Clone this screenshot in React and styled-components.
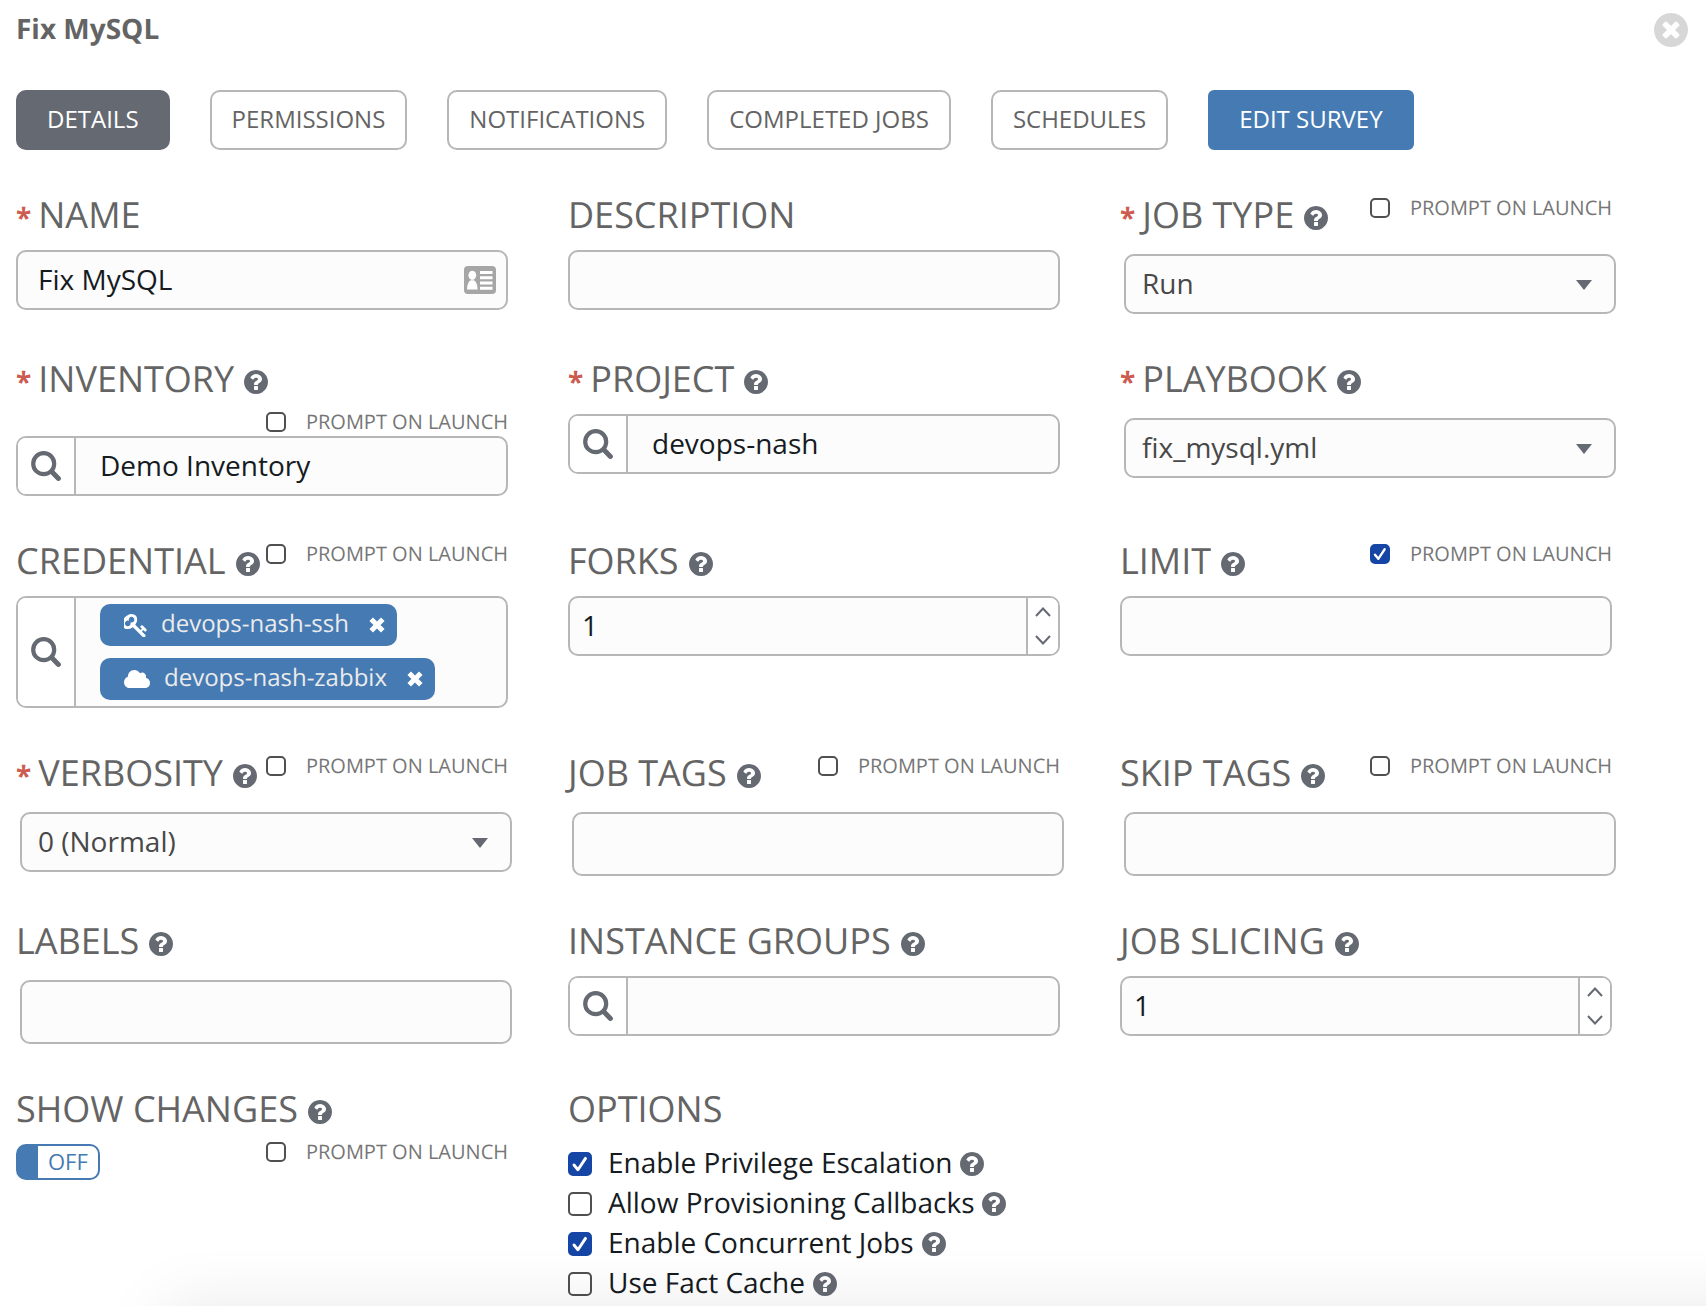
import React, { useId } from 'react';
import styled, { createGlobalStyle, css } from 'styled-components';
import { FaCloud } from 'react-icons/fa';

const color = {
  text: '#161b1f',
  label: '#646464',
  prompt: '#767676',
  icon: '#656972',
  border: '#b7b7b7',
  field: '#fcfcfc',
  blue: '#467ab3',
  check: '#1646a5',
  error: '#cc5b50',
};

const GlobalStyle = createGlobalStyle`
  *, *::before, *::after { box-sizing: border-box; }
  body {
    margin: 0;
    background: #fff;
    color: ${color.text};
    font-family: "Open Sans", "Noto Sans", sans-serif;
    text-rendering: geometricPrecision;
  }
  button, input, select { font: inherit; color: inherit; margin: 0; }
  button { cursor: pointer; }
`;

const Panel = styled.main`
  padding: 10px 18px 0 16px;
`;

const Header = styled.header`
  display: flex;
  align-items: center;
  justify-content: space-between;
  height: 40px;
  margin-bottom: 40px;
`;

const Title = styled.h1`
  margin: 0;
  padding-bottom: 2px;
  font-size: 28px;
  line-height: 38px;
  font-weight: 700;
  color: ${color.label};
`;

const CloseButton = styled.button`
  display: flex;
  padding: 0;
  border: 0;
  background: none;
  color: #d7d7d7;
`;

const Tabs = styled.nav`
  display: flex;
  flex-wrap: wrap;
  gap: 20px 40px;
  margin-bottom: 44px;
`;

const Tab = styled.button`
  height: 60px;
  padding: 0 20px 2px;
  border: 2px solid ${color.border};
  border-radius: 10px;
  background: #fff;
  color: ${color.label};
  font-size: 24px;
  line-height: 32px;
  ${({ $tone }) => $tone && css`
    padding: 0 29px 2px;
    color: #fff;
  `}
  ${({ $tone }) => $tone === 'active' && css`
    background: ${color.icon};
    border-color: ${color.icon};
  `}
  ${({ $tone }) => $tone === 'primary' && css`
    background: ${color.blue};
    border-color: ${color.blue};
    border-radius: 6px;
  `}
`;

const Form = styled.form`
  display: grid;
  grid-template-columns: repeat(3, minmax(0, 1fr));
  gap: 44px 60px;
  align-items: start;
  padding-right: 76px;
`;

const FieldBox = styled.div`
  min-width: 0;
`;

const FieldHead = styled.div`
  display: flex;
  justify-content: space-between;
  margin-bottom: ${({ $inset }) => ($inset ? '20px' : '16px')};
  ${({ $stacked }) => $stacked && css`
    flex-direction: column;
    gap: 10px;
    margin-bottom: 0;
  `}
`;

const LabelLine = styled.div`
  height: 40px;
  font-size: 36px;
  line-height: 42px;
  color: ${color.label};
  white-space: nowrap;
`;

const Required = styled.span`
  margin-right: 7px;
  color: ${color.error};
  font-size: 28px;
  font-weight: 700;
  line-height: 1;
`;

const HelpButton = styled.button`
  display: inline-flex;
  margin-left: ${({ $tight }) => ($tight ? '8px' : '10px')};
  padding: 0;
  border: 0;
  background: none;
  color: ${color.icon};
  line-height: 1;
  vertical-align: -2px;
`;

const PromptLabel = styled.label`
  display: flex;
  align-items: center;
  align-self: ${({ $end }) => ($end ? 'flex-end' : 'flex-start')};
  gap: 20px;
  height: 28px;
  font-size: 20px;
  line-height: 28px;
  color: ${color.prompt};
  white-space: nowrap;
`;

const CheckFrame = styled.span`
  display: inline-grid;
  flex: none;
  width: ${({ $size }) => $size}px;
  height: ${({ $size }) => $size}px;
  & > * { grid-area: 1 / 1; width: 100%; height: 100%; }
  svg { pointer-events: none; visibility: hidden; }
  input:checked + svg { visibility: visible; }
`;

const CheckInput = styled.input`
  appearance: none;
  border: 2px solid #505050;
  border-radius: 5px;
  background: #fff;
  &:checked {
    border-color: ${color.check};
    background: ${color.check};
  }
`;

const frame = css`
  border: 2px solid ${color.border};
  border-radius: 10px;
  background: ${color.field};
`;

const Control = styled.div`
  ${frame}
  display: flex;
  align-items: stretch;
  min-height: 60px;
  overflow: hidden;
`;

const BareInput = styled.input`
  flex: 1;
  min-width: 0;
  padding: 0 ${({ $inset }) => $inset || 20}px 2px;
  border: 0;
  outline: 0;
  background: transparent;
  appearance: textfield;
  font-size: 28px;
  line-height: 40px;
  &::-webkit-inner-spin-button { appearance: none; }
`;

const Adornment = styled.span`
  display: flex;
  align-items: center;
  padding-right: 10px;
`;

const SearchButton = styled.button`
  display: flex;
  align-items: center;
  justify-content: center;
  flex: none;
  width: 58px;
  padding: 0;
  border: 0;
  border-right: 2px solid ${color.border};
  background: #fff;
  color: ${color.icon};
`;

const Chips = styled.ul`
  display: flex;
  flex-direction: column;
  align-items: flex-start;
  gap: 12px;
  margin: 0;
  padding: 6px 24px;
  list-style: none;
`;

const Chip = styled.li`
  display: flex;
  align-items: center;
  height: 42px;
  padding: 0 12px 0 24px;
  border-radius: 10px;
  background: ${color.blue};
  color: #ebebeb;
  font-size: 24px;
  line-height: 40px;
`;

const ChipText = styled.span`
  margin: 0 20px 0 14px;
  padding-bottom: 2px;
`;

const ChipRemove = styled.button`
  display: flex;
  padding: 0;
  border: 0;
  background: none;
  color: #fff;
`;

const Stepper = styled.div`
  display: flex;
  flex-direction: column;
  flex: none;
  width: 32px;
  border-left: 2px solid ${color.border};
  background: #fff;
`;

const StepButton = styled.button`
  display: flex;
  flex: 1;
  align-items: ${({ $down }) => ($down ? 'flex-start' : 'flex-end')};
  justify-content: center;
  padding: 9px 0;
  border: 0;
  background: none;
  color: ${color.icon};
`;

const Inset = styled.div`
  position: relative;
  width: 100%;
  margin-left: 4px;
`;

const SelectInput = styled.select`
  ${frame}
  display: block;
  appearance: none;
  width: 100%;
  height: 60px;
  padding: 0 48px 2px 16px;
  color: #484848;
  font-size: 28px;
  line-height: 40px;
`;

const Caret = styled.svg`
  position: absolute;
  top: 26px;
  right: 24px;
  pointer-events: none;
  fill: ${color.icon};
`;

const TagInput = styled.input`
  ${frame}
  display: block;
  width: 100%;
  height: 64px;
  padding: 0 16px;
  font-size: 28px;
`;

const SwitchRow = styled.div`
  display: flex;
  align-items: flex-start;
  justify-content: space-between;
  padding-top: 10px;
`;

const Switch = styled.button`
  width: 84px;
  height: 36px;
  margin-top: 6px;
  padding: 0 0 2px 10px;
  border: 2px solid ${color.blue};
  border-left-width: 22px;
  border-radius: 10px;
  background: #fff;
  color: ${color.blue};
  font-size: 22px;
  line-height: 30px;
  text-align: left;
`;

const OptionGroup = styled.fieldset`
  min-width: 0;
  margin: 0;
  padding: 0;
  border: 0;
`;

const Legend = styled.legend`
  height: 40px;
  margin-bottom: 16px;
  padding: 0;
  font-size: 36px;
  line-height: 42px;
  color: ${color.label};
`;

const OptionRow = styled.div`
  display: flex;
  align-items: center;
  height: 40px;
  font-size: 28px;
  line-height: 38px;
  white-space: nowrap;
`;

const OptionLabel = styled.label`
  display: flex;
  align-items: center;
  gap: 16px;
`;

const OptionText = styled.span`
  padding-bottom: 2px;
`;

const EdgeShadow = styled.div`
  position: fixed;
  left: 165px;
  right: -100px;
  bottom: -200px;
  height: 200px;
  box-shadow: 0 0 64px rgba(0, 0, 0, 0.09);
  pointer-events: none;
`;

const QuestionIcon = () => (
  <svg width="24" height="24" viewBox="128 128 1536 1536" fill="currentColor" aria-hidden="true">
    <path d="M1024 1376v-192q0-14-9-23t-23-9h-192q-14 0-23 9t-9 23v192q0 14 9 23t23 9h192q14 0 23-9t9-23zm256-672q0-88-55.500-163t-138.500-116-170-41q-243 0-371 213-15 24 8 42l132 100q7 6 19 6 16 0 25-12 53-68 86-92 34-24 86-24 48 0 85.500 26t37.500 59q0 38-20 61t-68 45q-63 28-115.500 86.500t-52.500 125.500v36q0 14 9 23t23 9h192q14 0 23-9t9-23q0-19 21.500-49.500t54.500-49.500q32-18 49-28.500t46-35 44.500-48 28-60.500 12.500-81zm384 192q0 209-103 385.500t-279.500 279.500-385.500 103-385.500-103-279.500-279.500-103-385.500 103-385.500 279.500-279.500 385.500-103 385.500 103 279.500 279.500 103 385.500z" />
  </svg>
);

const CloseIcon = () => (
  <svg width="34" height="34" viewBox="128 128 1536 1536" fill="currentColor" aria-hidden="true">
    <path d="M1277 1122q0-26-19-45l-181-181 181-181q19-19 19-45 0-27-19-46l-90-90q-19-19-46-19-26 0-45 19l-181 181-181-181q-19-19-45-19-27 0-46 19l-90 90q-19 19-19 46 0 26 19 45l181 181-181 181q-19 19-19 45 0 27 19 46l90 90q19 19 46 19 26 0 45-19l181-181 181 181q19 19 45 19 27 0 46-19l90-90q19-19 19-46zm387-226q0 209-103 385.500t-279.500 279.500-385.500 103-385.500-103-279.500-279.500-103-385.500 103-385.500 279.500-279.500 385.500-103 385.500 103 279.500 279.500 103 385.500z" />
  </svg>
);

const SearchIcon = () => (
  <svg width="30" height="30" viewBox="0 0 30 30" fill="none" stroke="currentColor" aria-hidden="true">
    <circle cx="12.7" cy="12.7" r="10.5" strokeWidth="4.2" />
    <path d="M20.6 20.6 27.4 27.4" strokeWidth="5" strokeLinecap="round" />
  </svg>
);

const KeyIcon = () => (
  <svg width="23" height="23" viewBox="128 128 1560 1560" fill="#fff" aria-hidden="true">
    <path d="M832 512q0-80-56-136t-136-56-136 56-56 136q0 42 19 83-41-19-83-19-80 0-136 56t-56 136 56 136 136 56 136-56 56-136q0-42-19-83 41 19 83 19 80 0 136-56t56-136zm851 704q0 17-49 66t-66 49q-9 0-28.500-16t-36.500-33-38.500-40-24.500-26l-96 96 220 220q28 28 28 68 0 42-39 81t-81 39q-40 0-68-28l-671-671q-176 131-365 131-163 0-265.500-102.500t-102.500-265.500q0-160 95-313t248-248 313-95q163 0 265.500 102.500t102.500 265.500q0 189-131 365l355 355 96-96q-3-3-26-24.500t-40-38.500-33-36.500-16-28.500q0-17 49-66t66-49q13 0 23 10 6 6 46 44.500t82 79.500 86.500 86 73 78 28.500 41z" />
  </svg>
);

const CrossIcon = () => (
  <svg width="16" height="16" viewBox="0 0 16 16" stroke="currentColor" strokeWidth="5" aria-hidden="true">
    <path d="M2.2 2.2 13.8 13.8M13.8 2.2 2.2 13.8" />
  </svg>
);

const CardIcon = () => (
  <svg width="32" height="28" viewBox="0 0 32 28" aria-hidden="true">
    <rect width="32" height="28" rx="4" fill="#a6a6a6" />
    <g fill="#fff">
      <ellipse cx="8.3" cy="9.3" rx="3.9" ry="4.6" />
      <path d="M3 23.5c0-5 1.6-8 3.600-9.300h3.400c2 1.300 3.600 4.300 3.600 9.300z" />
      <path d="M16 5h12.500v3H16zM16 10.300h12.500v3H16zM16 15.600h12.500v3H16zM16 20.800h12.500v3H16z" />
    </g>
  </svg>
);

const Chevron = ({ down }) => (
  <svg width="16" height="10" viewBox="0 0 16 10" fill="none" stroke="currentColor" strokeWidth="2" aria-hidden="true">
    <path d={down ? 'M1 1 8 8.5 15 1' : 'M1 9 8 1.5 15 9'} />
  </svg>
);

const Help = ({ about, tight }) => (
  <HelpButton type="button" $tight={tight} aria-label={`Help: ${about}`}>
    <QuestionIcon />
  </HelpButton>
);

const Check = ({ size, ...rest }) => (
  <CheckFrame $size={size}>
    <CheckInput type="checkbox" {...rest} />
    <svg viewBox="0 0 20 20" fill="none" stroke="#fff" strokeWidth="2.4" strokeLinecap="round" strokeLinejoin="round" aria-hidden="true">
      <path d="M5 10.8 8.3 14.8 14.6 5.3" />
    </svg>
  </CheckFrame>
);

const Prompt = ({ checked, end }) => (
  <PromptLabel $end={end}>
    <Check size={20} defaultChecked={checked} />
    PROMPT ON LAUNCH
  </PromptLabel>
);

const Head = ({ id, label, required, help, prompt, promptChecked, stacked, inset }) => (
  <FieldHead $stacked={stacked} $inset={inset}>
    <LabelLine>
      {required && <Required>*</Required>}
      <label htmlFor={id}>{label}</label>
      {help && <Help about={label} />}
    </LabelLine>
    {prompt && <Prompt checked={promptChecked} end={stacked} />}
  </FieldHead>
);

const TextField = ({ value = '', icon, ...head }) => {
  const id = useId();
  return (
    <FieldBox>
      <Head id={id} {...head} />
      <Control>
        <BareInput id={id} type="text" defaultValue={value} />
        {icon && <Adornment>{icon}</Adornment>}
      </Control>
    </FieldBox>
  );
};

const LookupField = ({ value = '', ...head }) => {
  const id = useId();
  return (
    <FieldBox>
      <Head id={id} {...head} />
      <Control>
        <SearchButton type="button" aria-label={`Search ${head.label}`}><SearchIcon /></SearchButton>
        <BareInput id={id} type="text" $inset={24} defaultValue={value} />
      </Control>
    </FieldBox>
  );
};

const CredentialField = ({ items, ...head }) => {
  const id = useId();
  return (
    <FieldBox>
      <Head id={id} {...head} />
      <Control>
        <SearchButton id={id} type="button"><SearchIcon /></SearchButton>
        <Chips>
          {items.map(({ name, icon }) => (
            <Chip key={name}>
              {icon}
              <ChipText>{name}</ChipText>
              <ChipRemove type="button" aria-label={`Remove ${name}`}><CrossIcon /></ChipRemove>
            </Chip>
          ))}
        </Chips>
      </Control>
    </FieldBox>
  );
};

const NumberField = ({ value, ...head }) => {
  const id = useId();
  return (
    <FieldBox>
      <Head id={id} {...head} />
      <Control>
        <BareInput id={id} type="number" $inset={12} defaultValue={value} />
        <Stepper>
          <StepButton type="button" aria-label="Increase"><Chevron /></StepButton>
          <StepButton type="button" $down aria-label="Decrease"><Chevron down /></StepButton>
        </Stepper>
      </Control>
    </FieldBox>
  );
};

const SelectField = ({ value, ...head }) => {
  const id = useId();
  return (
    <FieldBox>
      <Head id={id} inset {...head} />
      <Inset>
        <SelectInput id={id} defaultValue={value}>
          <option>{value}</option>
        </SelectInput>
        <Caret width="16" height="10" viewBox="0 0 16 10" aria-hidden="true"><path d="M0 0h16L8 10z" /></Caret>
      </Inset>
    </FieldBox>
  );
};

const TagField = (head) => {
  const id = useId();
  return (
    <FieldBox>
      <Head id={id} inset {...head} />
      <Inset><TagInput id={id} type="text" /></Inset>
    </FieldBox>
  );
};

const SwitchField = ({ label }) => {
  const id = useId();
  return (
    <FieldBox>
      <LabelLine>
        <label htmlFor={id}>{label}</label>
        <Help about={label} />
      </LabelLine>
      <SwitchRow>
        <Switch id={id} type="button" role="switch" aria-checked="false">OFF</Switch>
        <Prompt />
      </SwitchRow>
    </FieldBox>
  );
};

const tabs = [
  ['DETAILS', 'active'],
  ['PERMISSIONS'],
  ['NOTIFICATIONS'],
  ['COMPLETED JOBS'],
  ['SCHEDULES'],
  ['EDIT SURVEY', 'primary'],
];

const credentials = [
  { name: 'devops-nash-ssh', icon: <KeyIcon /> },
  { name: 'devops-nash-zabbix', icon: <FaCloud size={26} color="#fff" /> },
];

const options = [
  ['Enable Privilege Escalation', true],
  ['Allow Provisioning Callbacks', false],
  ['Enable Concurrent Jobs', true],
  ['Use Fact Cache', false],
];

export default function App() {
  return (
    <>
      <GlobalStyle />
      <Panel>
        <Header>
          <Title>Fix MySQL</Title>
          <CloseButton type="button" aria-label="Close"><CloseIcon /></CloseButton>
        </Header>
        <Tabs>
          {tabs.map(([name, tone]) => (
            <Tab key={name} type="button" $tone={tone}>{name}</Tab>
          ))}
        </Tabs>
        <Form onSubmit={(e) => e.preventDefault()}>
          <TextField label="NAME" required value="Fix MySQL" icon={<CardIcon />} />
          <TextField label="DESCRIPTION" />
          <SelectField label="JOB TYPE" required help prompt value="Run" />

          <LookupField label="INVENTORY" required help prompt stacked value="Demo Inventory" />
          <LookupField label="PROJECT" required help value="devops-nash" />
          <SelectField label="PLAYBOOK" required help value="fix_mysql.yml" />

          <CredentialField label="CREDENTIAL" help prompt items={credentials} />
          <NumberField label="FORKS" help value={1} />
          <TextField label="LIMIT" help prompt promptChecked />

          <SelectField label="VERBOSITY" required help prompt value="0 (Normal)" />
          <TagField label="JOB TAGS" help prompt />
          <TagField label="SKIP TAGS" help prompt />

          <TagField label="LABELS" help />
          <LookupField label="INSTANCE GROUPS" help />
          <NumberField label="JOB SLICING" help value={1} />

          <SwitchField label="SHOW CHANGES" />
          <OptionGroup>
            <Legend>OPTIONS</Legend>
            {options.map(([name, on]) => (
              <OptionRow key={name}>
                <OptionLabel>
                  <Check size={24} defaultChecked={on} />
                  <OptionText>{name}</OptionText>
                </OptionLabel>
                <Help about={name} tight />
              </OptionRow>
            ))}
          </OptionGroup>
        </Form>
      </Panel>
      <EdgeShadow />
    </>
  );
}
